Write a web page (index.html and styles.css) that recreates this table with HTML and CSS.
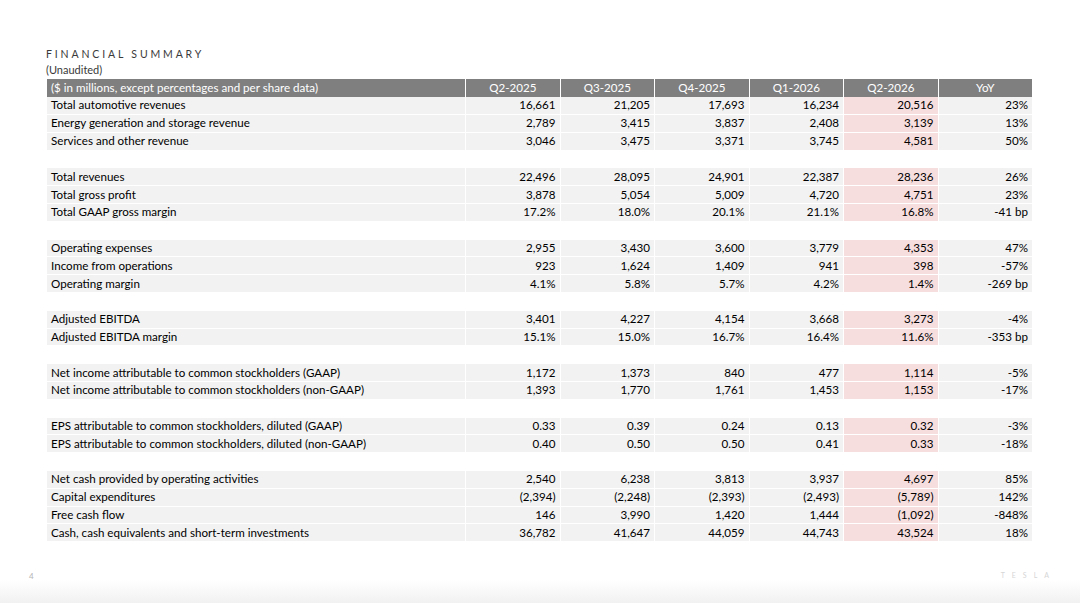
FILE: index.html
```html
<!DOCTYPE html>
<html lang="en">
<head>
  <meta charset="UTF-8" />
  <meta name="viewport" content="width=device-width, initial-scale=1.0"/>
  <title>Financial Summary</title>
  <link rel="stylesheet" href="styles.css">
</head>
<body>
  <div class="slide">
    <div class="title">FINANCIAL SUMMARY</div>
    <div class="subtitle">(Unaudited)</div>

    <table class="summary">
      <thead>
        <tr>
          <th class="label">($ in millions, except percentages and per share data)</th>
          <th>Q2-2025</th>
          <th>Q3-2025</th>
          <th>Q4-2025</th>
          <th>Q1-2026</th>
          <th>Q2-2026</th>
          <th>YoY</th>
        </tr>
      </thead>
      <tbody>
        <tr><td class="label">Total automotive revenues</td><td>16,661</td><td>21,205</td><td>17,693</td><td>16,234</td><td class="cur">20,516</td><td>23%</td></tr>
        <tr><td class="label">Energy generation and storage revenue</td><td>2,789</td><td>3,415</td><td>3,837</td><td>2,408</td><td class="cur">3,139</td><td>13%</td></tr>
        <tr><td class="label">Services and other revenue</td><td>3,046</td><td>3,475</td><td>3,371</td><td>3,745</td><td class="cur">4,581</td><td>50%</td></tr>
        <tr class="gap"><td colspan="7"></td></tr>
        <tr><td class="label">Total revenues</td><td>22,496</td><td>28,095</td><td>24,901</td><td>22,387</td><td class="cur">28,236</td><td>26%</td></tr>
        <tr><td class="label">Total gross profit</td><td>3,878</td><td>5,054</td><td>5,009</td><td>4,720</td><td class="cur">4,751</td><td>23%</td></tr>
        <tr><td class="label">Total GAAP gross margin</td><td>17.2%</td><td>18.0%</td><td>20.1%</td><td>21.1%</td><td class="cur">16.8%</td><td>-41 bp</td></tr>
        <tr class="gap"><td colspan="7"></td></tr>
        <tr><td class="label">Operating expenses</td><td>2,955</td><td>3,430</td><td>3,600</td><td>3,779</td><td class="cur">4,353</td><td>47%</td></tr>
        <tr><td class="label">Income from operations</td><td>923</td><td>1,624</td><td>1,409</td><td>941</td><td class="cur">398</td><td>-57%</td></tr>
        <tr><td class="label">Operating margin</td><td>4.1%</td><td>5.8%</td><td>5.7%</td><td>4.2%</td><td class="cur">1.4%</td><td>-269 bp</td></tr>
        <tr class="gap"><td colspan="7"></td></tr>
        <tr><td class="label">Adjusted EBITDA</td><td>3,401</td><td>4,227</td><td>4,154</td><td>3,668</td><td class="cur">3,273</td><td>-4%</td></tr>
        <tr><td class="label">Adjusted EBITDA margin</td><td>15.1%</td><td>15.0%</td><td>16.7%</td><td>16.4%</td><td class="cur">11.6%</td><td>-353 bp</td></tr>
        <tr class="gap"><td colspan="7"></td></tr>
        <tr><td class="label">Net income attributable to common stockholders (GAAP)</td><td>1,172</td><td>1,373</td><td>840</td><td>477</td><td class="cur">1,114</td><td>-5%</td></tr>
        <tr><td class="label">Net income attributable to common stockholders (non-GAAP)</td><td>1,393</td><td>1,770</td><td>1,761</td><td>1,453</td><td class="cur">1,153</td><td>-17%</td></tr>
        <tr class="gap"><td colspan="7"></td></tr>
        <tr><td class="label">EPS attributable to common stockholders, diluted (GAAP)</td><td>0.33</td><td>0.39</td><td>0.24</td><td>0.13</td><td class="cur">0.32</td><td>-3%</td></tr>
        <tr><td class="label">EPS attributable to common stockholders, diluted (non-GAAP)</td><td>0.40</td><td>0.50</td><td>0.50</td><td>0.41</td><td class="cur">0.33</td><td>-18%</td></tr>
        <tr class="gap"><td colspan="7"></td></tr>
        <tr><td class="label">Net cash provided by operating activities</td><td>2,540</td><td>6,238</td><td>3,813</td><td>3,937</td><td class="cur">4,697</td><td>85%</td></tr>
        <tr><td class="label">Capital expenditures</td><td>(2,394)</td><td>(2,248)</td><td>(2,393)</td><td>(2,493)</td><td class="cur">(5,789)</td><td>142%</td></tr>
        <tr><td class="label">Free cash flow</td><td>146</td><td>3,990</td><td>1,420</td><td>1,444</td><td class="cur">(1,092)</td><td>-848%</td></tr>
        <tr><td class="label">Cash, cash equivalents and short-term investments</td><td>36,782</td><td>41,647</td><td>44,059</td><td>44,743</td><td class="cur">43,524</td><td>18%</td></tr>
      </tbody>
    </table>

    <div class="footer">
      <span class="page-num">4</span>
      <span class="brand">TESLA</span>
    </div>
  </div>
</body>
</html>
```

FILE: styles.css
```css
body {
  margin: 0;
  background: #fff;
  font-family: Lato, "Open Sans", sans-serif;
  color: #000;
}

.slide {
  height: 603px;
  display: flex;
  flex-direction: column;
  padding: 0 47px 0 46px;
  box-sizing: border-box;
}

.title {
  margin-top: 47px;
  font-size: 10.5px;
  letter-spacing: 2.85px;
  color: #3a3a3a;
  line-height: 14px;
}

.subtitle {
  font-size: 11px;
  color: #3a3a3a;
  line-height: 17px;
  margin-bottom: 1px;
}

.summary {
  width: 987px;
  border-collapse: collapse;
  table-layout: fixed;
  font-size: 11.6px;
}

.summary th,
.summary td {
  height: 17.8px;
  padding: 0 4px 0 4px;
  box-sizing: border-box;
  border: 1px solid #fff;
  border-top: none;
  line-height: 16px;
  text-align: right;
  white-space: nowrap;
}

.summary th {
  background: #7f7f7f;
  color: #fff;
  font-weight: normal;
  text-align: center;
  border-bottom: none;
}

.summary th.label {
  width: 419px;
  text-align: left;
}

.summary td {
  background: #f2f2f2;
}

.summary td.label {
  text-align: left;
}

.summary td.cur {
  background: #f7dede;
}

.summary tr.gap td {
  background: #fff;
}

.footer {
  margin-top: auto;
  margin-left: -46px;
  margin-right: -47px;
  height: 32px;
  padding: 6px 24px 0 29px;
  display: flex;
  justify-content: space-between;
  align-items: flex-start;
  background: linear-gradient(#fff 0%, #fff 40%, #f1f1f1 100%);
}

.page-num {
  font-size: 8px;
  color: #b5b5b5;
}

.brand {
  font-size: 7px;
  letter-spacing: 7px;
  color: #d6d6d6;
}
```
